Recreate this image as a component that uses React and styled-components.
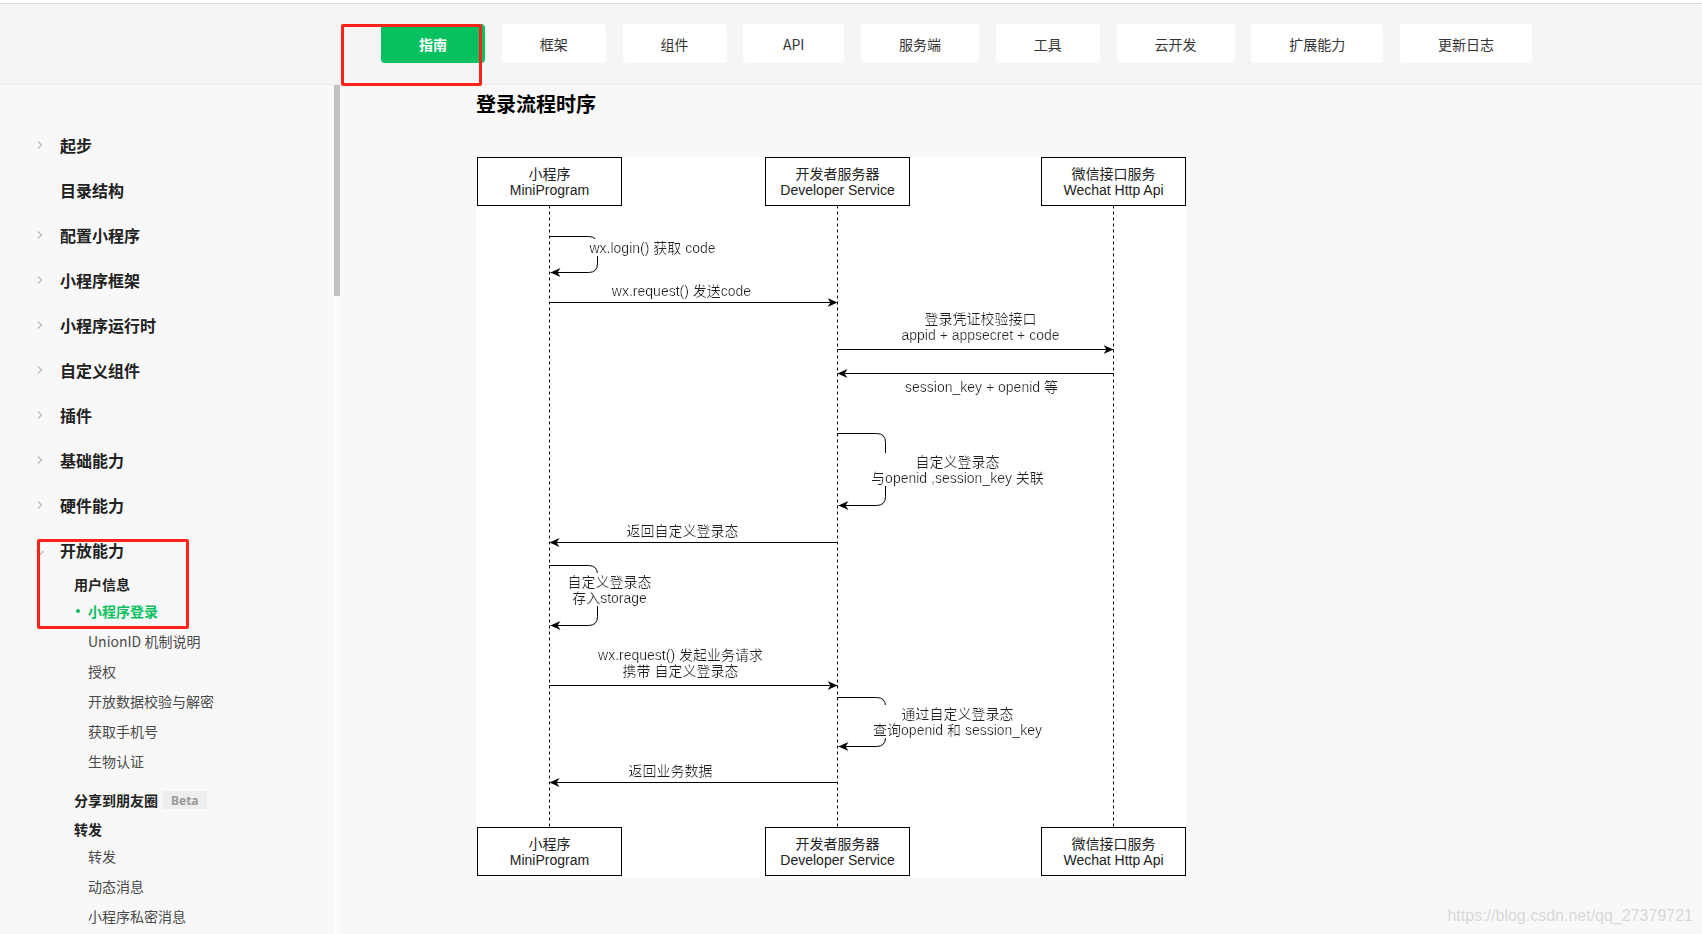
import React from 'react';
import styled, { createGlobalStyle } from 'styled-components';

const GlobalStyle = createGlobalStyle`
  html, body {
    margin: 0;
    padding: 0;
    background: #fff;
  }
  body {
    font-family: "Noto Sans CJK SC", "Noto Sans", sans-serif;
  }
`;

const Page = styled.div`
  position: relative;
  width: 1702px;
  height: 934px;
  overflow: hidden;
  box-sizing: border-box;
  padding-top: 3px;
  display: flex;
  flex-direction: column;
  background: #fff;
`;

const Header = styled.header`
  flex-shrink: 0;
  height: 82px;
  box-sizing: border-box;
  border-top: 1px solid #dcdcdc;
  border-bottom: 1px solid #ececec;
  background: #f5f5f5;
  padding: 20px 0 0 381px;
  display: flex;
  align-items: flex-start;
  gap: 16.75px;
`;

const NavButton = styled.div`
  height: 39px;
  min-width: 101px;
  box-sizing: border-box;
  padding: 0 38px;
  border-radius: 4px;
  display: flex;
  align-items: center;
  justify-content: center;
  font-size: 14px;
  background: ${(p) => (p.$active ? '#07c160' : '#fff')};
  color: ${(p) => (p.$active ? '#fff' : '#353535')};
  font-weight: ${(p) => (p.$active ? 600 : 400)};
`;

const Body = styled.div`
  flex: 1;
  display: flex;
  background: #f8f8f8;
`;

const Sidebar = styled.aside`
  width: 340px;
  flex-shrink: 0;
  display: flex;
`;

const SideNav = styled.nav`
  width: 334px;
  padding-top: 37px;
`;

const ScrollTrack = styled.div`
  width: 6px;
  background: #fbfbfb;
`;

const ScrollThumb = styled.div`
  height: 211px;
  background: #c1c1c1;
`;

const Row = styled.div`
  height: 45px;
  display: flex;
  align-items: center;
  padding-left: 36px;
  font-size: 16px;
  font-weight: 600;
  color: #222;
`;

const ChevronSlot = styled.span`
  width: 24px;
  display: flex;
  align-items: center;
`;

const Group = styled.div`
  margin-bottom: 5px;
`;

const GroupTitle = styled.div`
  height: 24px;
  display: flex;
  align-items: center;
  padding-left: 74px;
  font-size: 14px;
  font-weight: 600;
  color: #222;
`;

const Badge = styled.span`
  margin-left: 5px;
  height: 18px;
  padding: 0 8px;
  display: inline-flex;
  align-items: center;
  background: #ededed;
  color: #9a9a9a;
  font-size: 12px;
  font-weight: 700;
  font-family: "Noto Sans", sans-serif;
`;

const ItemList = styled.div`
  padding-bottom: 7px;
`;

const Item = styled.div`
  height: 30px;
  display: flex;
  align-items: center;
  padding-left: ${(p) => (p.$active ? '76px' : '88px')};
  font-size: 14px;
  color: ${(p) => (p.$active ? '#07c160' : '#4a4a4a')};
  font-weight: ${(p) => (p.$active ? 600 : 400)};
`;

const Dot = styled.span`
  width: 4px;
  height: 4px;
  border-radius: 50%;
  background: #07c160;
  margin-right: 8px;
`;

const Main = styled.main`
  flex: 1;
  padding: 5px 0 0 136px;
`;

const Title = styled.h2`
  margin: 0;
  font-size: 20px;
  line-height: 28px;
  font-weight: 700;
  color: #000;
`;

const Diagram = styled.svg`
  display: block;
  margin-top: 39px;
  background: #fff;
`;

const RedBox = styled.div`
  position: absolute;
  top: ${(p) => p.$top}px;
  left: ${(p) => p.$left}px;
  width: ${(p) => p.$w}px;
  height: ${(p) => p.$h}px;
  box-sizing: border-box;
  border: 3px solid #ff2218;
  border-radius: 2px;
`;

const Watermark = styled.div`
  position: absolute;
  right: 9px;
  bottom: 9px;
  font-family: "Liberation Sans", Arial, sans-serif;
  font-size: 16px;
  color: #d8d8d8;
`;

const navItems = ['指南', '框架', '组件', 'API', '服务端', '工具', '云开发', '扩展能力', '更新日志'];

const topItems = [
  { label: '起步', arrow: true },
  { label: '目录结构' },
  { label: '配置小程序', arrow: true },
  { label: '小程序框架', arrow: true },
  { label: '小程序运行时', arrow: true },
  { label: '自定义组件', arrow: true },
  { label: '插件', arrow: true },
  { label: '基础能力', arrow: true },
  { label: '硬件能力', arrow: true },
];

const groups = [
  {
    title: '用户信息',
    items: [
      { label: '小程序登录', active: true },
      { label: 'UnionID 机制说明' },
      { label: '授权' },
      { label: '开放数据校验与解密' },
      { label: '获取手机号' },
      { label: '生物认证' },
    ],
  },
  { title: '分享到朋友圈', badge: 'Beta', items: [] },
  {
    title: '转发',
    items: [{ label: '转发' }, { label: '动态消息' }, { label: '小程序私密消息' }],
  },
];

const ChevronRight = () => (
  <svg width="8" height="10" viewBox="0 0 8 10">
    <polyline points="2,1.5 5.5,5 2,8.5" fill="none" stroke="#bdbdbd" strokeWidth="1.3" />
  </svg>
);

const ChevronDown = () => (
  <svg width="10" height="8" viewBox="0 0 10 8" style={{ marginTop: 6, marginLeft: -1 }}>
    <polyline points="1.5,2 5,5.5 8.5,2" fill="none" stroke="#bdbdbd" strokeWidth="1.3" />
  </svg>
);

// sequence diagram
const actors = [
  { x: 73, lines: ['小程序', 'MiniProgram'] },
  { x: 361, lines: ['开发者服务器', 'Developer Service'] },
  { x: 637, lines: ['微信接口服务', 'Wechat Http Api'] },
];

const arrows = [
  { from: 73, to: 361, y: 145, label: ['wx.request() 发送code'], lx: 205, ly: 134 },
  { from: 361, to: 637, y: 192, label: ['登录凭证校验接口', 'appid + appsecret + code'], lx: 504, ly: 162 },
  { from: 637, to: 361, y: 216, label: ['session_key + openid 等'], lx: 505, ly: 230 },
  { from: 361, to: 73, y: 385, label: ['返回自定义登录态'], lx: 206, ly: 374 },
  { from: 73, to: 361, y: 528, label: ['wx.request() 发起业务请求', '携带 自定义登录态'], lx: 204, ly: 498 },
  { from: 361, to: 73, y: 625, label: ['返回业务数据'], lx: 194, ly: 614 },
];

const loops = [
  { x: 73, top: 79, bottom: 115, label: ['wx.login() 获取 code'], lx: 176, ly: 91 },
  { x: 361, top: 276, bottom: 348, label: ['自定义登录态', '与openid ,session_key 关联'], lx: 481, ly: 305 },
  { x: 73, top: 408, bottom: 468, label: ['自定义登录态', '存入storage'], lx: 133, ly: 425 },
  { x: 361, top: 540, bottom: 589, label: ['通过自定义登录态', '查询openid 和 session_key'], lx: 481, ly: 557 },
];

const Label = ({ x, y, lines, bg = true }) => (
  <text x={x} y={y + 4} textAnchor="middle" filter={bg ? 'url(#labelBg)' : undefined}>
    {lines.map((l, i) => (
      <tspan key={i} x={x} y={y + 4 + i * 16}>
        {l}
      </tspan>
    ))}
  </text>
);

const ActorBox = ({ x, y, lines }) => (
  <g>
    <rect x={x - 72} y={y} width="144" height="48" fill="#fff" stroke="#000" />
    <Label x={x} y={y + 17} lines={lines} bg={false} />
  </g>
);

const loopPath = ({ x, top, bottom }) => {
  const right = x + 48;
  const r = 9;
  return `M${x} ${top} H${right - r} Q${right} ${top} ${right} ${top + r} V${bottom - r} Q${right} ${bottom} ${right - r} ${bottom} H${x + 1}`;
};

const SequenceDiagram = () => (
  <Diagram width="710" height="720" viewBox="0 0 710 720">
    <defs>
      <filter id="labelBg" x="0" y="0" width="1" height="1">
        <feFlood floodColor="#fff" />
        <feComposite in="SourceGraphic" operator="over" />
      </filter>
      <marker
        id="head"
        viewBox="0 0 10 10"
        refX="10"
        refY="5"
        markerWidth="10"
        markerHeight="10"
        markerUnits="userSpaceOnUse"
        orient="auto"
      >
        <path d="M0,0.5 L10,5 L0,9.5 L3,5 Z" fill="#000" />
      </marker>
    </defs>
    <g
      transform="translate(0.5 0.5)"
      fontFamily='"Liberation Sans", "Noto Sans CJK SC", sans-serif'
      fontSize="14"
      fill="#222"
    >
      {actors.map((a) => (
        <line key={a.x} x1={a.x} y1="48" x2={a.x} y2="671" stroke="#000" strokeDasharray="3 3" />
      ))}
      {arrows.map((m, i) => (
        <g key={i}>
          <line x1={m.from} y1={m.y} x2={m.to} y2={m.y} stroke="#000" markerEnd="url(#head)" />
          <Label x={m.lx} y={m.ly} lines={m.label} />
        </g>
      ))}
      {loops.map((l, i) => (
        <g key={i}>
          <path d={loopPath(l)} fill="none" stroke="#000" markerEnd="url(#head)" />
          <Label x={l.lx} y={l.ly} lines={l.label} />
        </g>
      ))}
      {actors.map((a) => (
        <ActorBox key={'t' + a.x} x={a.x} y={0} lines={a.lines} />
      ))}
      {actors.map((a) => (
        <ActorBox key={'b' + a.x} x={a.x} y={670} lines={a.lines} />
      ))}
    </g>
  </Diagram>
);

export default function App() {
  return (
    <Page>
      <GlobalStyle />
      <Header>
        {navItems.map((n, i) => (
          <NavButton key={n} $active={i === 0}>
            {n}
          </NavButton>
        ))}
      </Header>
      <Body>
        <Sidebar>
          <SideNav>
            {topItems.map((t) => (
              <Row key={t.label}>
                <ChevronSlot>{t.arrow && <ChevronRight />}</ChevronSlot>
                {t.label}
              </Row>
            ))}
            <Row>
              <ChevronSlot>
                <ChevronDown />
              </ChevronSlot>
              开放能力
            </Row>
            {groups.map((g) => (
              <Group key={g.title}>
                <GroupTitle>
                  {g.title}
                  {g.badge && <Badge>{g.badge}</Badge>}
                </GroupTitle>
                {g.items.length > 0 && (
                  <ItemList>
                    {g.items.map((it) => (
                      <Item key={it.label} $active={it.active}>
                        {it.active && <Dot />}
                        {it.label}
                      </Item>
                    ))}
                  </ItemList>
                )}
              </Group>
            ))}
          </SideNav>
          <ScrollTrack>
            <ScrollThumb />
          </ScrollTrack>
        </Sidebar>
        <Main>
          <Title>登录流程时序</Title>
          <SequenceDiagram />
        </Main>
      </Body>
      <RedBox $top={24} $left={341} $w={141} $h={62} />
      <RedBox $top={539} $left={37} $w={152} $h={90} />
      <Watermark>https://blog.csdn.net/qq_27379721</Watermark>
    </Page>
  );
}
